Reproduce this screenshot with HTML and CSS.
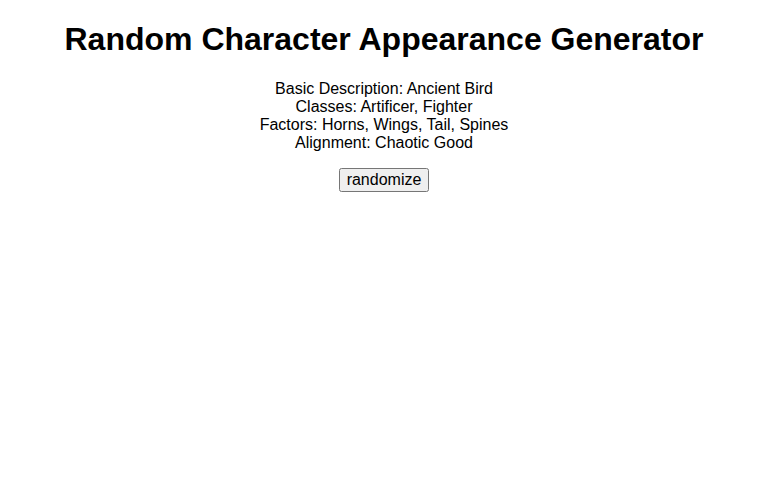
FILE: index.html
```html
<!DOCTYPE html>
<html lang="en">
<head>
    <meta charset="UTF-8">
    <meta name="viewport" content="width=device-width, initial-scale=1.0">
    <title>Random Character Appearance Generator</title>
    <link rel="stylesheet" href="styles.css">
</head>
<body>

    <h1>Random Character Appearance Generator</h1>

    <div id="character">
        <div>Basic Description: <span id="description">Ancient Bird</span></div>
        <div>Classes: <span id="classes">Artificer, Fighter</span></div>
        <div>Factors: <span id="factors">Horns, Wings, Tail, Spines</span></div>
        <div>Alignment: <span id="alignment">Chaotic Good</span></div>
    </div>

    <button id="randomizeButton">randomize</button>

</body>
</html>
```

FILE: styles.css
```css
body {
    margin: 0;
    font-family: "Liberation Sans", Arial, sans-serif;
    text-align: center;
    color: #000;
    background: #fff;
}

h1 {
    font-size: 32px;
    margin: 21px 0 22px;
}

#character {
    font-size: 16px;
}

button {
    margin-top: 16px;
    font-family: "Liberation Sans", Arial, sans-serif;
    font-size: 16px;
    padding: 1px 6px;
}
```
